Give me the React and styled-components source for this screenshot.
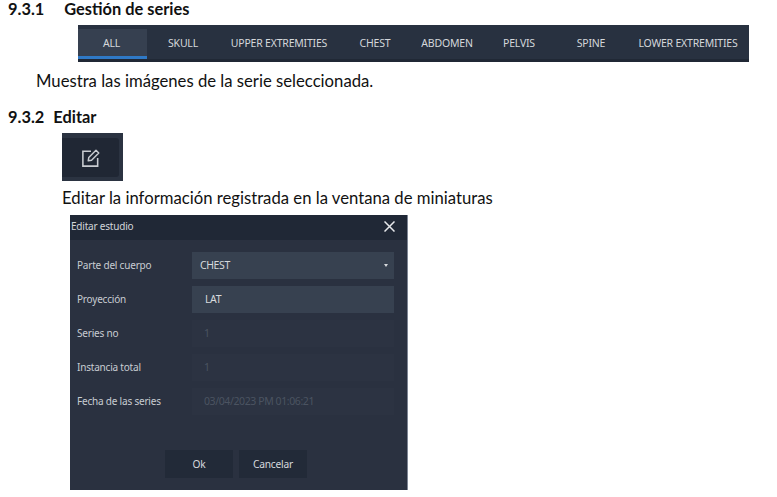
import React from 'react'
import styled, { createGlobalStyle } from 'styled-components'

const GlobalStyle = createGlobalStyle`
  html, body { margin: 0; padding: 0; background: #fff; }
  body { font-family: "Lato", "Liberation Sans", sans-serif; color: #111; }
`

const Page = styled.div`
  width: 777px;
  height: 497px;
  overflow: hidden;
  display: flex;
  flex-direction: column;
`
const Heading = styled.h2`
  margin: ${({ $top }) => $top || 0}px 0 0;
  height: 17px;
  line-height: 17px;
  font-size: 16.4px;
  font-weight: 700;
  padding-left: 8px;
  display: flex;
  gap: ${({ $gap }) => $gap}px;
`
const TabBar = styled.div`
  margin: 8px 0 0 78px;
  width: 671px;
  height: 37px;
  box-sizing: border-box;
  background: #283140;
  border-bottom: 3px solid #202835;
  padding-top: 4px;
  display: grid;
  grid-template-columns: 69px 72px 120px 72px 72px 72px 72px 122px;
`
const Tab = styled.div`
  display: flex;
  align-items: center;
  justify-content: center;
  padding-right: ${({ $active }) => ($active ? '2px' : '0')};
  font-family: "Noto Sans", sans-serif;
  font-size: 10.5px;
  letter-spacing: -0.2px;
  color: #d4d7db;
  background: ${({ $active }) => ($active ? '#364050' : 'transparent')};
  border-bottom: 3px solid ${({ $active }) => ($active ? '#2f79c6' : 'transparent')};
`
const Body = styled.p`
  margin: ${({ $top }) => $top}px 0 0 ${({ $left }) => $left}px;
  font-size: 16.7px;
  line-height: 20px;
  height: 20px;
  white-space: nowrap;
`
const EditFrame = styled.div`
  margin: 8px 0 0 62px;
  width: 61px;
  height: 48px;
  box-sizing: border-box;
  padding: 5px 4px 4px 0;
  background: #2b3341;
  display: flex;
`
const EditInner = styled.div`
  flex: 1;
  background: #202734;
  border-radius: 0 3px 3px 0;
  display: flex;
  align-items: center;
  justify-content: center;
`
const Modal = styled.div`
  margin: 7px 0 0 70px;
  width: 338px;
  height: 275px;
  box-sizing: border-box;
  background: #2a3140;
  border-right: 1px solid #7d8594;
  display: flex;
  flex-direction: column;
  font-family: "Noto Sans", sans-serif;
`
const ModalHead = styled.div`
  height: 25px;
  box-sizing: border-box;
  background: #202836;
  padding: 0 12px 3px 1px;
  display: flex;
  align-items: center;
  justify-content: space-between;
  font-size: 10px;
  letter-spacing: -0.2px;
  color: #d2d5da;
`
const Rows = styled.div`
  padding: 12px 13px 0 7px;
  display: flex;
  flex-direction: column;
  gap: 7px;
`
const Row = styled.div`
  display: grid;
  grid-template-columns: 115px 1fr;
  height: 27px;
  align-items: center;
`
const Label = styled.span`
  font-size: 10px;
  letter-spacing: -0.2px;
  color: #c8ccd2;
  padding-bottom: 2px;
`
const Field = styled.div`
  height: 27px;
  box-sizing: border-box;
  display: flex;
  align-items: center;
  justify-content: space-between;
  padding: 0 6px 2px ${({ $pad }) => $pad || 12}px;
  font-size: 10.5px;
  letter-spacing: -0.4px;
  background: ${({ $disabled }) => ($disabled ? '#2c3342' : '#374150')};
  color: ${({ $disabled }) => ($disabled ? '#4b5361' : '#d6d9dd')};
`
const Caret = styled.span`
  width: 0;
  height: 0;
  margin-top: 2px;
  border-left: 2.5px solid transparent;
  border-right: 2.5px solid transparent;
  border-top: 3px solid #d6d9dd;
`
const Actions = styled.div`
  margin-top: 35px;
  display: flex;
  justify-content: center;
  gap: 6px;
  padding-right: 5px;
`
const Action = styled.button`
  width: 68px;
  height: 28px;
  border: 0;
  padding: 0;
  background: #222a38;
  color: #d6d9dd;
  font-family: "Noto Sans", sans-serif;
  font-size: 10.2px;
  letter-spacing: -0.2px;
`

const tabs = [
  'ALL',
  'SKULL',
  'UPPER EXTREMITIES',
  'CHEST',
  'ABDOMEN',
  'PELVIS',
  'SPINE',
  'LOWER EXTREMITIES',
]

const EditIcon = () => (
  <svg width="20" height="20" viewBox="0 0 18 18" fill="none" stroke="#c9ccd1">
    <path d="M9 3H1.700v13.300H15V9" strokeWidth="1.4" />
    <path d="M6.500 11.500 7 8.500 13.500 2 16 4.500 9.500 11Z" strokeWidth="1.3" strokeLinejoin="round" />
  </svg>
)

const CloseIcon = () => (
  <svg width="11" height="11" viewBox="0 0 11 11" stroke="#e6e8eb" strokeWidth="1.5">
    <path d="M.5.5l10 10M10.500.5l-10 10" />
  </svg>
)

export default function App() {
  return (
    <Page>
      <GlobalStyle />
      <Heading $gap={20}>
        <span>9.3.1</span>
        <span>Gestión de series</span>
      </Heading>
      <TabBar>
        {tabs.map((t, i) => (
          <Tab key={t} $active={i === 0}>{t}</Tab>
        ))}
      </TabBar>
      <Body $top={9} $left={36}>Muestra las imágenes de la serie seleccionada.</Body>
      <Heading $gap={9} $top={17}>
        <span>9.3.2</span>
        <span>Editar</span>
      </Heading>
      <EditFrame>
        <EditInner><EditIcon /></EditInner>
      </EditFrame>
      <Body $top={7} $left={62}>Editar la información registrada en la ventana de miniaturas</Body>
      <Modal>
        <ModalHead>
          <span>Editar estudio</span>
          <CloseIcon />
        </ModalHead>
        <Rows>
          <Row>
            <Label>Parte del cuerpo</Label>
            <Field $pad={8}>CHEST<Caret /></Field>
          </Row>
          <Row>
            <Label>Proyección</Label>
            <Field $pad={13}>LAT</Field>
          </Row>
          <Row>
            <Label>Series no</Label>
            <Field $disabled>1</Field>
          </Row>
          <Row>
            <Label>Instancia total</Label>
            <Field $disabled>1</Field>
          </Row>
          <Row>
            <Label>Fecha de las series</Label>
            <Field $disabled>03/04/2023 PM 01:06:21</Field>
          </Row>
        </Rows>
        <Actions>
          <Action>Ok</Action>
          <Action>Cancelar</Action>
        </Actions>
      </Modal>
    </Page>
  )
}
